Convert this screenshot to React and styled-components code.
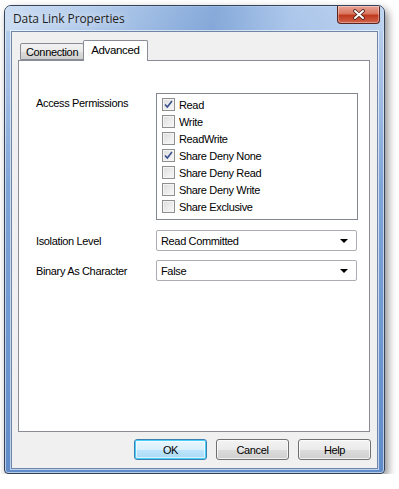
import React from 'react';
import styled, { createGlobalStyle } from 'styled-components';

const GlobalStyle = createGlobalStyle`
  html, body {
    margin: 0;
    padding: 0;
    background: #ffffff;
  }
  body {
    padding: 5px 0 0 4px;
    font-family: "Liberation Sans", Arial, sans-serif;
    font-size: 11px;
    letter-spacing: -0.35px;
    color: #000;
  }
`;

const Window = styled.div`
  width: 381px;
  height: 469px;
  box-sizing: border-box;
  display: flex;
  flex-direction: column;
  border: 1px solid #34425a;
  border-radius: 7px 7px 4px 4px;
  background: linear-gradient(180deg, #bcd2ee 0px, #a9c3e7 60px, #7fa5d8 180px, #5f8bca 100%);
  box-shadow: 3px 4px 8px rgba(0,0,0,0.45), inset 0 0 0 1px rgba(255,255,255,0.55);
  overflow: hidden;
`;

const TitleBar = styled.div`
  height: 25px;
  display: flex;
  align-items: flex-start;
  justify-content: space-between;
  padding: 0 4px 0 8px;
  background: linear-gradient(100deg, rgba(205,222,243,0.9) 0%, rgba(170,197,232,0.6) 25%, rgba(92,138,202,0.55) 55%, rgba(160,190,232,0.5) 75%, rgba(190,212,240,0.7) 100%);
`;

const Title = styled.div`
  font-family: "Open Sans", "Noto Sans", sans-serif;
  font-size: 12px;
  letter-spacing: -0.1px;
  line-height: 25px;
  color: #1e1e1e;
  text-shadow: 0 0 8px rgba(255,255,255,0.9);
`;

const CloseButton = styled.div`
  width: 43px;
  height: 18px;
  box-sizing: border-box;
  border: 1px solid #5a2420;
  border-top: none;
  border-radius: 0 0 4px 4px;
  background: linear-gradient(180deg, #e8a395 0%, #d9765f 45%, #c0391f 55%, #d0634a 100%);
  box-shadow: inset 0 0 0 1px rgba(255,255,255,0.35);
  display: flex;
  align-items: center;
  justify-content: center;
`;

const Client = styled.div`
  flex: 1;
  margin: 0 6px 4px 6px;
  background: #f0f0f0;
  border: 1px solid #6f86a8;
  box-shadow: 0 0 0 1px rgba(255,255,255,0.6);
  display: flex;
  flex-direction: column;
  padding: 8px 7px 8px 6px;
`;

const TabStrip = styled.div`
  display: flex;
  align-items: flex-end;
  height: 20px;
  padding-left: 2px;
  position: relative;
  z-index: 1;
`;

const Tab = styled.div`
  height: ${p => (p.$active ? '21px' : '17px')};
  box-sizing: border-box;
  padding: ${p => (p.$active ? '2px 7px 0' : '1px 5px 0')};
  border: 1px solid #898c95;
  border-bottom: ${p => (p.$active ? 'none' : '1px solid #898c95')};
  margin-left: ${p => (p.$active ? '-1px' : '0')};
  margin-bottom: ${p => (p.$active ? '-1px' : '0')};
  background: ${p => (p.$active ? '#ffffff' : 'linear-gradient(180deg, #f2f2f2 0%, #ebebeb 50%, #dddddd 51%, #cfcfcf 100%)')};
  border-radius: 2px 2px 0 0;
  font-size: ${p => (p.$active ? '11.5px' : '11px')};
  line-height: 15px;
`;

const TabPanel = styled.div`
  flex: 1;
  background: #ffffff;
  border: 1px solid #898c95;
  padding: 32px 0 0 17px;
  display: grid;
  grid-template-columns: 120px 202px;
  grid-auto-rows: min-content;
  row-gap: 9px;
  align-content: start;
`;

const Label = styled.div`
  padding-top: ${p => p.$top || '0'};
  align-self: ${p => (p.$top ? 'start' : 'center')};
`;

const ListBox = styled.div`
  height: 127px;
  box-sizing: border-box;
  border: 1px solid #828790;
  padding: 2px 0 0 5px;
  display: flex;
  flex-direction: column;
  margin-bottom: 1px;
`;

const CheckRow = styled.div`
  height: 17px;
  display: flex;
  align-items: center;
  gap: 4px;
`;

const Box = styled.div`
  width: 13px;
  height: 13px;
  box-sizing: border-box;
  border: 1px solid #8e8f8f;
  background: linear-gradient(135deg, #dcdcdc 0%, #eeeeee 60%, #f8f8f8 100%);
  box-shadow: inset 0 0 0 1px #f4f4f4;
  display: flex;
  align-items: center;
  justify-content: center;
`;

const Select = styled.div`
  height: 21px;
  box-sizing: border-box;
  border: 1px solid #abadb3;
  border-radius: 2px;
  background: #ffffff;
  display: flex;
  align-items: center;
  justify-content: space-between;
  padding: 0 8px 0 4px;
  width: 201px;
`;

const Arrow = styled.div`
  width: 0;
  height: 0;
  border-left: 4px solid transparent;
  border-right: 4px solid transparent;
  border-top: 4px solid #000;
  margin-top: 1px;
`;

const ButtonRow = styled.div`
  display: flex;
  justify-content: flex-end;
  gap: 9px;
  padding-top: 7px;
  margin-right: -1px;
`;

const Button = styled.div`
  width: 73px;
  height: 21px;
  box-sizing: border-box;
  border: 1px solid ${p => (p.$default ? '#3c7fb1' : '#707070')};
  border-radius: 3px;
  background: ${p =>
    p.$default
      ? 'linear-gradient(180deg, #eaf6fd 0%, #d9f0fc 50%, #bee6fd 51%, #a7d9f5 100%)'
      : 'linear-gradient(180deg, #f2f2f2 0%, #ebebeb 50%, #dddddd 51%, #cfcfcf 100%)'};
  box-shadow: ${p => (p.$default ? 'inset 0 0 0 1px #48d0f8, inset 0 0 0 2px rgba(255,255,255,0.6)' : 'inset 0 0 0 1px rgba(255,255,255,0.7)')};
  display: flex;
  align-items: center;
  justify-content: center;
`;

const Check = () => (
  <svg width="9" height="9" viewBox="0 0 9 9">
    <path d="M1 4.5 L3.3 7 L8 1" fill="none" stroke="#3a4f8f" strokeWidth="1.6" />
  </svg>
);

const CloseGlyph = () => (
  <svg width="14" height="11" viewBox="0 0 14 11">
    <path d="M3 2 L11 9 M11 2 L3 9" stroke="#4a1e18" strokeWidth="3.6" strokeLinecap="round" />
    <path d="M3 2 L11 9 M11 2 L3 9" stroke="#ffffff" strokeWidth="2" strokeLinecap="round" />
  </svg>
);

const permissions = [
  { name: 'Read', checked: true },
  { name: 'Write', checked: false },
  { name: 'ReadWrite', checked: false },
  { name: 'Share Deny None', checked: true },
  { name: 'Share Deny Read', checked: false },
  { name: 'Share Deny Write', checked: false },
  { name: 'Share Exclusive', checked: false }
];

export default function App() {
  return (
    <>
      <GlobalStyle />
      <Window>
        <TitleBar>
          <Title>Data Link Properties</Title>
          <CloseButton><CloseGlyph /></CloseButton>
        </TitleBar>
        <Client>
          <TabStrip>
            <Tab>Connection</Tab>
            <Tab $active>Advanced</Tab>
          </TabStrip>
          <TabPanel>
            <Label $top="4px">Access Permissions</Label>
            <ListBox>
              {permissions.map(p => (
                <CheckRow key={p.name}>
                  <Box>{p.checked && <Check />}</Box>
                  {p.name}
                </CheckRow>
              ))}
            </ListBox>
            <Label>Isolation Level</Label>
            <Select>Read Committed<Arrow /></Select>
            <Label>Binary As Character</Label>
            <Select>False<Arrow /></Select>
          </TabPanel>
          <ButtonRow>
            <Button $default>OK</Button>
            <Button>Cancel</Button>
            <Button>Help</Button>
          </ButtonRow>
        </Client>
      </Window>
    </>
  );
}
